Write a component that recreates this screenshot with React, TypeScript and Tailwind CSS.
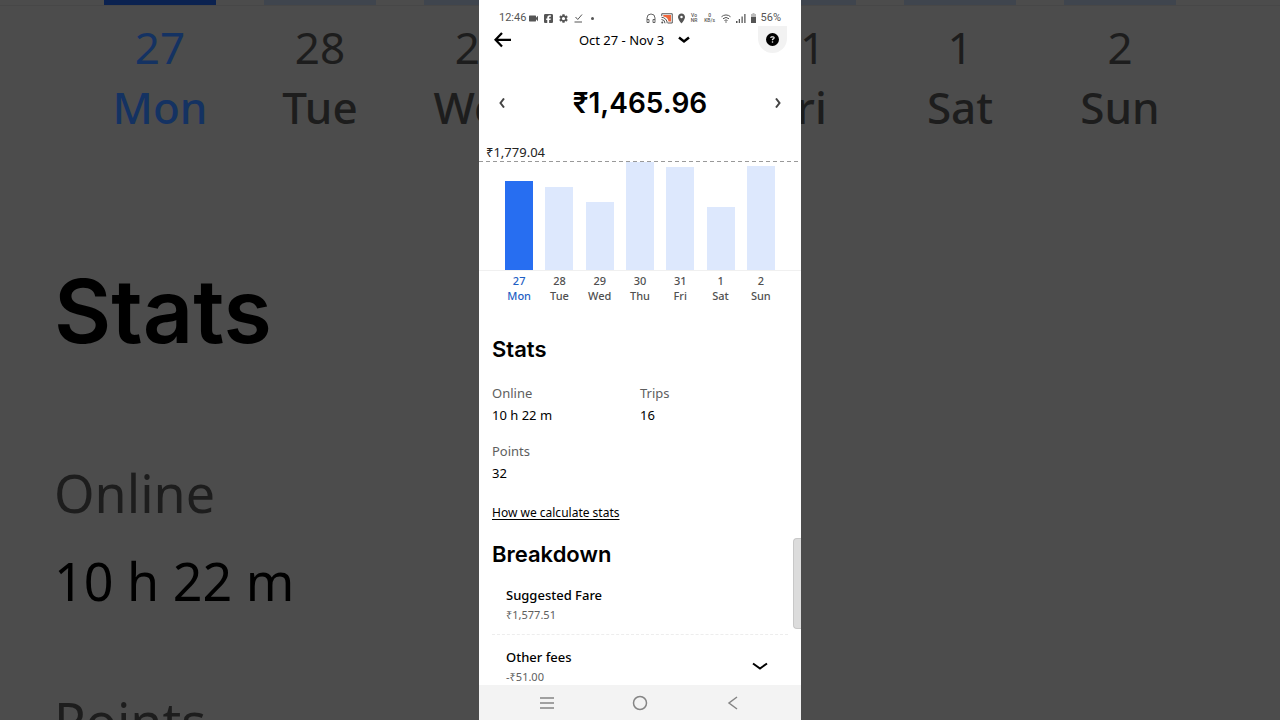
import React from 'react';
import { MdLocationOn, MdSettings, MdVideocam } from 'react-icons/md';
import { FaCircleQuestion, FaSquareFacebook } from 'react-icons/fa6';

const MAX_FARE = 1779.04;

const days = [
  { date: '27', day: 'Mon', amount: 1465.96, active: true },
  { date: '28', day: 'Tue', amount: 1375.2 },
  { date: '29', day: 'Wed', amount: 1118.4 },
  { date: '30', day: 'Thu', amount: 1779.04 },
  { date: '31', day: 'Fri', amount: 1690.1 },
  { date: '1', day: 'Sat', amount: 1036.8 },
  { date: '2', day: 'Sun', amount: 1712.3 },
];

const stats = [
  { label: 'Online', value: '10 h 22 m' },
  { label: 'Trips', value: '16' },
  { label: 'Points', value: '32' },
];

const HeadsetIcon = () => (
  <svg viewBox="0 0 20 22" className="h-[11px] w-2.5 shrink-0" fill="none" stroke="#555" strokeWidth="1.800">
    <path d="M2 19V10a8 8 0 0 1 16 0v9h-4v-6h4M2 19h4v-6H2" />
  </svg>
);

const CastIcon = () => (
  <svg viewBox="0 0 24 22" className="h-[11px] w-3 shrink-0">
    <path d="M1.500 6V1.500h21V20H14" fill="none" stroke="#555" strokeWidth="2" />
    <path d="M4.500 4h15.500v13h-5C14.500 11 10.500 7.500 4.500 7z" fill="#f0683c" />
    <path d="M1 8.500A12 12 0 0 1 12.500 20.500M1 13a7.500 7.500 0 0 1 7 7.500" fill="none" stroke="#555" strokeWidth="2" />
    <circle cx="2.500" cy="19" r="2" fill="#555" />
  </svg>
);

const WifiIcon = () => (
  <svg viewBox="0 0 20 18" className="h-[9px] w-2.5 shrink-0" fill="none" stroke="#555" strokeWidth="2">
    <path d="M1 5.500a13 13 0 0 1 18 0M4 9.500a9 9 0 0 1 12 0M7 13a5 5 0 0 1 6 0" />
    <circle cx="10" cy="16" r="1.500" fill="#555" stroke="none" />
  </svg>
);

const SignalIcon = () => (
  <svg viewBox="0 0 20 18" className="h-[9px] w-2.5 shrink-0" fill="#555">
    <path d="M0 14h3v4H0zM5.500 10h2.500v8H5.500zM11 5h2.500v13H11zM16.500 0H19v18h-2.500z" />
  </svg>
);

const BatteryIcon = () => (
  <svg viewBox="0 0 10 20" className="h-2.5 w-[5px] shrink-0">
    <path d="M3 0h4v2h3v7H0V2h3z" fill="#bbb" />
    <path d="M0 8h10v12H0z" fill="#555" />
  </svg>
);

const StatusBar: React.FC = () => (
  <div className="flex h-[26px] items-center justify-between pt-2.5 pr-5 pl-5 font-['Roboto',sans-serif] text-[11px] leading-4 text-[#555]">
    <div className="flex items-center gap-[3px]">
      <span>12:46</span>
      <div className="flex items-center gap-1.5">
        <MdVideocam viewBox="3 5 18 14" className="h-[7px] w-[9px]" />
        <FaSquareFacebook viewBox="0 32 448 448" className="h-[9px] w-[9px]" />
        <MdSettings viewBox="2 2 20 20" className="h-[9px] w-[9px]" />
        <svg viewBox="0 0 18 20" className="h-2.5 w-[9px]" fill="none" stroke="currentColor" strokeWidth="2">
          <path d="M3 8l4.500 5L16 3M1 18h15" />
        </svg>
        <span className="ml-0.5 h-[3px] w-[3px] rounded-full bg-[#555]" />
      </div>
    </div>
    <div className="flex items-center gap-[5px]">
      <HeadsetIcon />
      <CastIcon />
      <MdLocationOn className="h-[11px] w-[7px]" viewBox="5 1 14 22" />
      <span className="w-[9px] text-center text-[5px] leading-[5px] font-medium">Vo<br />NR</span>
      <span className="w-3 text-center text-[5px] leading-[5px] font-medium">0<br />KB/s</span>
      <WifiIcon />
      <SignalIcon />
      <BatteryIcon />
      <span>56%</span>
    </div>
  </div>
);

const Header: React.FC = () => (
  <header className="flex h-[27px] items-center justify-between pr-3.5 pl-[15px]">
    <button aria-label="Back">
      <svg viewBox="0 0 34 32" className="h-4 w-[17px]" fill="none" stroke="#000" strokeWidth="4.500">
        <path d="M16 2L3 15.500 16 29M3 15.500h31" />
      </svg>
    </button>
    <button className="flex items-center gap-3.5 text-[13px] leading-5">
      Oct 27 - Nov 3
      <svg viewBox="0 0 24 16" className="h-2 w-3" fill="none" stroke="#000" strokeWidth="5">
        <path d="M2 3l10 8L22 3" />
      </svg>
    </button>
    <button aria-label="Help" className="flex h-[27px] w-[29px] items-center justify-center rounded-t-xl rounded-b-full bg-[#f2f2f2]">
      <FaCircleQuestion className="h-[13px] w-[13px]" />
    </button>
  </header>
);

const WeekChart: React.FC = () => (
  <section>
    <p className="px-[7px] text-[13px] leading-[17px] text-[#222]">₹1,779.04</p>
    <div className="h-px bg-[repeating-linear-gradient(90deg,#999_0_4px,transparent_4px_7px)]" />
    <div className="grid h-[109px] grid-cols-7 items-end border-b border-[#f0f0f0] px-5">
      {days.map((d) => (
        <div
          key={d.day}
          className={d.active ? 'mx-auto w-7 bg-[#276ef1]' : 'mx-auto w-7 bg-[#dde8fd]'}
          style={{ height: `${(d.amount / MAX_FARE) * 100}%` }}
        />
      ))}
    </div>
    <div className="grid grid-cols-7 px-5 pt-0.5 text-center text-[11px] leading-[15px] font-medium">
      {days.map((d) => (
        <p key={d.day} className={d.active ? 'text-[#1f5fc4]' : 'text-[#505050]'}>
          {d.date}
          <br />
          {d.day}
        </p>
      ))}
    </div>
  </section>
);

// Enlarged, dimmed copy of the page that fills the space beside the phone
const Backdrop: React.FC = () => (
  <div aria-hidden="true" className="absolute inset-0 overflow-hidden bg-[#4c4c4c] text-[#1d1d1d]">
    <div className="grid grid-cols-7 px-[6.25%]">
      {days.map((d) => (
        <div key={d.day} className={d.active ? 'mx-auto h-[5px] w-[70%] bg-[#0b2250]' : 'mx-auto h-[5px] w-[70%] bg-[#3f454e]'} />
      ))}
    </div>
    <div className="grid grid-cols-7 border-t border-[#474747] px-[6.25%] pt-[11px] text-center text-[44px] leading-[60px]">
      {days.map((d) => (
        <p key={d.day} className={d.active ? 'text-[#143262]' : ''}>
          {d.date}
          <br />
          <span className="font-medium">{d.day}</span>
        </p>
      ))}
    </div>
    <div className="px-[54px] pt-[126px]">
      <p className="font-['Inter',sans-serif] text-[88px] leading-[96px] font-semibold text-black">Stats</p>
      <p className="pt-[90px] text-[52px] leading-[88px]">Online</p>
      <p className="text-[52px] leading-[88px] text-black">10 h 22 m</p>
      <p className="pt-[52px] text-[52px] leading-[88px]">Points</p>
    </div>
  </div>
);

export default function App() {
  return (
    <div className="relative h-screen overflow-hidden font-['Noto_Sans',sans-serif] text-black">
      <Backdrop />
      <main className="relative mx-auto flex h-full w-[322px] max-w-full flex-col bg-white">
        <StatusBar />
        <Header />

        <div className="relative min-h-0 flex-1 overflow-hidden">
          <div className="flex items-center justify-between px-5 pt-[30px] pb-[21px]">
            <button aria-label="Previous day">
              <svg viewBox="0 0 12 20" className="h-2.5 w-1.5" fill="none" stroke="#444" strokeWidth="4">
                <path d="M10 1L3 10l7 9" />
              </svg>
            </button>
            <h1 className="font-['Inter',sans-serif] text-[28px] leading-10 font-semibold">₹1,465.96</h1>
            <button aria-label="Next day">
              <svg viewBox="0 0 12 20" className="h-2.5 w-1.5" fill="none" stroke="#444" strokeWidth="4">
                <path d="M2 1l7 9-7 9" />
              </svg>
            </button>
          </div>

          <WeekChart />

          <section className="px-[13px] pt-[30px]">
            <h2 className="font-['Inter',sans-serif] text-[22px] leading-8 font-semibold">Stats</h2>
            <dl className="grid grid-cols-2 gap-y-3.5 pt-[17px] text-[13px] leading-[22px]">
              {stats.map((s) => (
                <div key={s.label}>
                  <dt className="text-[#5e5e5e]">{s.label}</dt>
                  <dd>{s.value}</dd>
                </div>
              ))}
            </dl>
            <a href="#stats" className="mt-5 block w-fit text-[12px] leading-[18px] underline underline-offset-2">
              How we calculate stats
            </a>
          </section>

          <section className="px-[13px] pt-4">
            <h2 className="font-['Inter',sans-serif] text-[22px] leading-8 font-semibold">Breakdown</h2>
            <div className="border-b border-dashed border-[#ededed] px-3.5 pt-[15px] pb-[9px]">
              <h3 className="text-[13px] leading-5 font-medium">Suggested Fare</h3>
              <p className="text-[11px] leading-5 text-[#5e5e5e]">₹1,577.51</p>
            </div>
            <div className="flex items-center justify-between pt-3 pr-5 pl-3.5">
              <div>
                <h3 className="text-[13px] leading-5 font-medium">Other fees</h3>
                <p className="text-[11px] leading-5 text-[#5e5e5e]">-₹51.00</p>
              </div>
              <button aria-label="Show other fees">
                <svg viewBox="0 0 32 20" className="h-2.5 w-4" fill="none" stroke="#000" strokeWidth="4">
                  <path d="M2 3l14 10L30 3" />
                </svg>
              </button>
            </div>
          </section>

          {/* Scroll thumb */}
          <div className="absolute right-0 bottom-14 h-[91px] w-2 rounded-l border border-r-0 border-[#c8c8c8] bg-[#dcdcdc]" />
        </div>

        <nav className="flex h-[35px] items-center justify-between bg-[#f3f3f3] px-[60px]">
          <button aria-label="Recent apps">
            <svg viewBox="0 0 16 16" className="h-4 w-4" fill="none" stroke="#858585" strokeWidth="1.500">
              <path d="M1 3h14M1 8h14M1 13h14" />
            </svg>
          </button>
          <button aria-label="Home">
            <svg viewBox="0 0 16 16" className="h-4 w-4" fill="none" stroke="#858585" strokeWidth="1.500">
              <circle cx="8" cy="8" r="6.500" />
            </svg>
          </button>
          <button aria-label="Back">
            <svg viewBox="0 0 16 16" className="h-4 w-4" fill="none" stroke="#858585" strokeWidth="1.500">
              <path d="M12 2L4 8l8 6" />
            </svg>
          </button>
        </nav>
      </main>
    </div>
  );
}
